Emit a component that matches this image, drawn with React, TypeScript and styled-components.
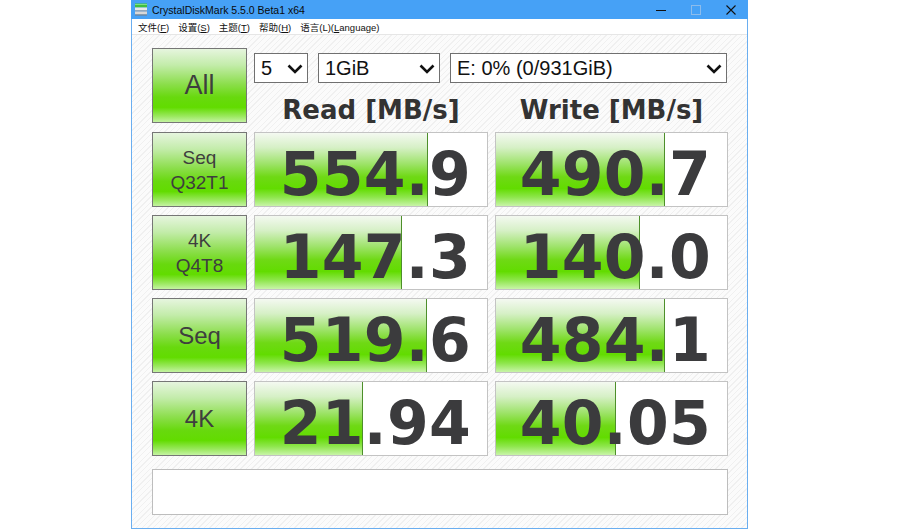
import React from 'react';
import styled, { createGlobalStyle } from 'styled-components';

const Global = createGlobalStyle`
  html, body { margin: 0; padding: 0; background: #ffffff; }
  body { width: 900px; height: 531px; overflow: hidden; }
`;

const Page = styled.div`
  display: flex;
  padding-left: 131px;
`;

const Window = styled.div`
  width: 617px;
  height: 529px;
  box-sizing: border-box;
  border: 1px solid #6aaef0;
  border-top: none;
  display: flex;
  flex-direction: column;
`;

const TitleBar = styled.div`
  height: 19px;
  margin: 0 -1px;
  background: #46a1f6;
  display: flex;
  align-items: center;
  padding-left: 4px;
`;

const TitleText = styled.span`
  font-family: "Liberation Sans", Arial, sans-serif;
  font-size: 10.5px;
  color: #0a0a0a;
  margin-left: 5px;
  flex: 1;
`;

const WinButton = styled.div`
  width: 35px;
  height: 19px;
  display: flex;
  align-items: center;
  justify-content: center;
`;

const MenuBar = styled.div`
  height: 15px;
  background: #ffffff;
  border-bottom: 1px solid #e6e6e6;
  display: flex;
  align-items: center;
  gap: 9px;
  padding-left: 6px;
  font-family: "Liberation Sans", "Noto Sans CJK SC", sans-serif;
  font-size: 9.5px;
  color: #111;
`;

const MenuItem = styled.span`
  white-space: nowrap;
  & u { text-decoration: underline; text-underline-offset: 1px; }
`;

const Content = styled.div`
  flex: 1;
  padding: 13px 0 0 20px;
  background: repeating-linear-gradient(135deg, #fbfbfb 0px, #fbfbfb 3px, #f0f0f0 3px, #f0f0f0 4px);
  display: flex;
  flex-direction: column;
`;

const TopGrid = styled.div`
  display: grid;
  grid-template-columns: 95px 234px 233px;
  grid-template-rows: 40px 35px;
  column-gap: 7px;
`;

const greenButton = `
  background: linear-gradient(to bottom, #e6f5de 0%, #c3ecaa 22%, #8cde4c 48%, #68d90e 66%, #62dc00 80%, #9ae85e 92%, #c4f3a2 100%);
`;

const LabelButton = styled.div<{ $size: number; $span?: boolean }>`
  box-sizing: border-box;
  border: 1px solid #767676;
  ${greenButton}
  display: flex;
  flex-direction: column;
  align-items: center;
  justify-content: center;
  font-family: "Liberation Sans", Arial, sans-serif;
  font-size: ${p => p.$size}px;
  line-height: ${p => Math.round(p.$size * 1.3)}px;
  color: #3e3e3e;
  grid-row: ${p => (p.$span ? '1 / span 2' : 'auto')};
`;

const Combos = styled.div`
  grid-column: 2 / span 2;
  grid-row: 1;
  display: flex;
  gap: 10px;
  margin-top: 5px;
  height: 30px;
`;

const Combo = styled.div<{ $w: number }>`
  box-sizing: border-box;
  width: ${p => p.$w}px;
  height: 30px;
  border: 1px solid #707070;
  background: #ffffff;
  display: flex;
  align-items: center;
  justify-content: space-between;
  padding: 1px 4px 0 6px;
  font-family: "Liberation Sans", Arial, sans-serif;
  font-size: 20px;
  color: #111;
`;

const Header = styled.div`
  grid-row: 2;
  text-align: center;
  font-family: "DejaVu Sans", Verdana, sans-serif;
  font-weight: bold;
  font-size: 26px;
  line-height: 30px;
  margin-top: 7px;
  color: #333333;
`;

const Rows = styled.div`
  display: grid;
  grid-template-columns: 95px 234px 233px;
  grid-auto-rows: 75px;
  column-gap: 7px;
  row-gap: 8px;
  margin-top: 9px;
`;

const ValueBox = styled.div<{ $fill: number }>`
  box-sizing: border-box;
  border: 1px solid #c3c3c3;
  background:
    linear-gradient(#4d8f2a, #4d8f2a) ${p => p.$fill - 1}px 0 / 1px 100% no-repeat,
    linear-gradient(to bottom, #f4f9f1 0%, #d6f0c6 20%, #9ee36a 42%, #6fd915 60%, #62dc00 76%, #8ee64c 88%, #c8f4a8 100%) 0 0 / ${p => p.$fill}px 100% no-repeat,
    #ffffff;
  text-align: right;
  padding: 11px 16px 0 0;
  font-family: "DejaVu Sans", Verdana, sans-serif;
  font-weight: bold;
  font-size: 60px;
  line-height: 60px;
  color: #3b3b3d;
  letter-spacing: 0.3px;
`;

const Comment = styled.div`
  box-sizing: border-box;
  margin-top: 13px;
  width: 576px;
  height: 46px;
  border: 1px solid #bdbdbd;
  background: #ffffff;
`;

const Chevron = () => (
  <svg width="16" height="10" viewBox="0 0 16 10">
    <polyline points="1.5,1.5 8,8 14.5,1.5" fill="none" stroke="#111" strokeWidth="2.6" />
  </svg>
);

const AppIcon = () => (
  <svg width="12" height="13" viewBox="0 0 12 13">
    <rect x="0" y="0.5" width="12" height="4" fill="#3fbf3f" />
    <rect x="0" y="1" width="12" height="1" fill="#7fe07f" />
    <rect x="0" y="4.5" width="12" height="3" fill="#e8e8e8" />
    <rect x="0" y="7.5" width="12" height="1" fill="#8a8a8a" />
    <rect x="0" y="8.5" width="12" height="3" fill="#d8d8d8" />
    <rect x="0" y="11.5" width="12" height="1" fill="#7a7a7a" />
  </svg>
);

type Row = { label: string[]; size: number; read: string; readFill: number; write: string; writeFill: number };

const rows: Row[] = [
  { label: ['Seq', 'Q32T1'], size: 19, read: '554.9', readFill: 173, write: '490.7', writeFill: 169 },
  { label: ['4K', 'Q4T8'], size: 19, read: '147.3', readFill: 147, write: '140.0', writeFill: 144 },
  { label: ['Seq'], size: 24, read: '519.6', readFill: 172, write: '484.1', writeFill: 169 },
  { label: ['4K'], size: 24, read: '21.94', readFill: 108, write: '40.05', writeFill: 120 },
];

export default function App() {
  return (
    <>
      <Global />
      <Page>
        <Window>
          <TitleBar>
            <AppIcon />
            <TitleText>CrystalDiskMark 5.5.0 Beta1 x64</TitleText>
            <WinButton>
              <svg width="10" height="10" viewBox="0 0 10 10"><line x1="0" y1="5.5" x2="10" y2="5.5" stroke="#111" strokeWidth="1" /></svg>
            </WinButton>
            <WinButton>
              <svg width="10" height="10" viewBox="0 0 10 10"><rect x="0.5" y="0.5" width="9" height="9" fill="none" stroke="#8cbcec" strokeWidth="1" /></svg>
            </WinButton>
            <WinButton>
              <svg width="10" height="10" viewBox="0 0 10 10"><path d="M0.5 0.5 L9.5 9.5 M9.5 0.5 L0.5 9.5" stroke="#111" strokeWidth="1.1" /></svg>
            </WinButton>
          </TitleBar>
          <MenuBar>
            <MenuItem>文件(<u>F</u>)</MenuItem>
            <MenuItem>设置(<u>S</u>)</MenuItem>
            <MenuItem>主题(<u>T</u>)</MenuItem>
            <MenuItem>帮助(<u>H</u>)</MenuItem>
            <MenuItem>语言(L)(<u>L</u>anguage)</MenuItem>
          </MenuBar>
          <Content>
            <TopGrid>
              <LabelButton $size={27} $span>All</LabelButton>
              <Combos>
                <Combo $w={54}><span>5</span><Chevron /></Combo>
                <Combo $w={122}><span>1GiB</span><Chevron /></Combo>
                <Combo $w={277}><span>E: 0% (0/931GiB)</span><Chevron /></Combo>
              </Combos>
              <Header>Read [MB/s]</Header>
              <Header>Write [MB/s]</Header>
            </TopGrid>
            <Rows>
              {rows.map((r, i) => (
                <React.Fragment key={i}>
                  <LabelButton $size={r.size}>
                    {r.label.map(t => <span key={t}>{t}</span>)}
                  </LabelButton>
                  <ValueBox $fill={r.readFill}>{r.read}</ValueBox>
                  <ValueBox $fill={r.writeFill}>{r.write}</ValueBox>
                </React.Fragment>
              ))}
            </Rows>
            <Comment />
          </Content>
        </Window>
      </Page>
    </>
  );
}
